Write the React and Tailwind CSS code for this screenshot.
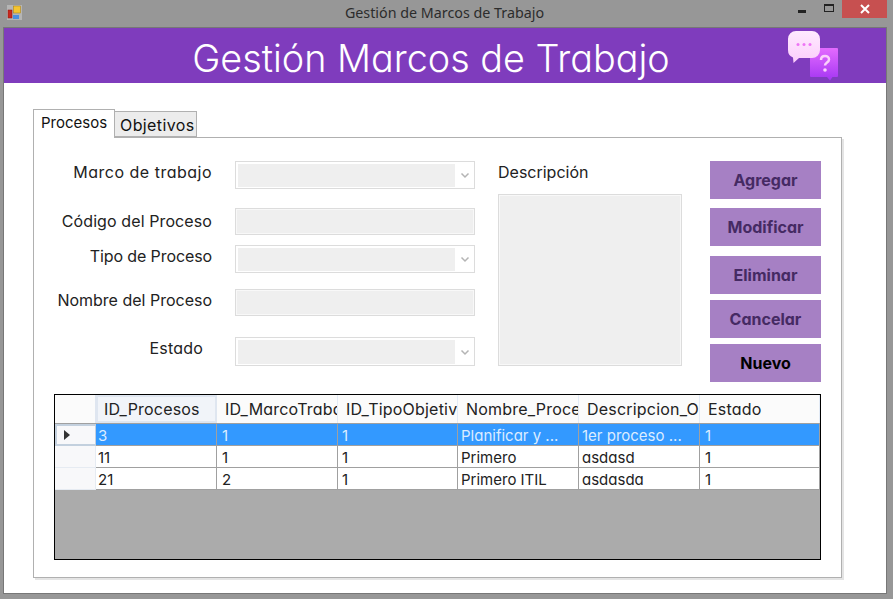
const columns = [
  { name: "ID_Procesos", width: 121, cell: "pl-[2px]" },
  { name: "ID_MarcoTrabajo", width: 121, cell: "pl-[5px]" },
  { name: "ID_TipoObjetivo", width: 120, cell: "pl-[4px]" },
  { name: "Nombre_Proceso", width: 121, cell: "pl-[3px]" },
  { name: "Descripcion_Objetivo", width: 121, cell: "pl-[3px]" },
  { name: "Estado", width: 120, cell: "pl-[5px]" },
];

const rows = [
  ["3", "1", "1", "Planificar y ...", "1er proceso ...", "1"],
  ["11", "1", "1", "Primero", "asdasd", "1"],
  ["21", "2", "1", "Primero ITIL", "asdasda", "1"],
];

const fields = [
  { label: "Marco de trabajo", select: true, className: "mt-0 h-[28px]", labelClass: "pb-[6px] pr-[23px] tracking-[0.5px]" },
  { label: "Código del Proceso", className: "mt-[19px] h-[27px]", labelClass: "pb-[2px] pr-[23px] tracking-[0.1px]" },
  { label: "Tipo de Proceso", select: true, className: "mt-[10px] h-[28px]", labelClass: "pb-[6px] pr-[23px] tracking-[-0.1px]" },
  { label: "Nombre del Proceso", className: "mt-[16px] h-[27px]", labelClass: "pb-[6px] pr-[23px]" },
  { label: "Estado", select: true, className: "mt-[21px] h-[29px]", labelClass: "pb-[8px] pr-[32px] tracking-[0.2px]" },
];

const buttons = [
  { label: "Agregar", className: "mt-0 text-[#452a63]" },
  { label: "Modificar", className: "mt-[9px] text-[#452a63]" },
  { label: "Eliminar", className: "mt-[10px] text-[#452a63]" },
  { label: "Cancelar", className: "mt-[6px] text-[#452a63]" },
  { label: "Nuevo", className: "mt-[6px] text-black" },
];

function Field({ field }) {
  return (
    <div className={`flex items-center ${field.className}`}>
      <div className={`w-[201px] text-right text-[16px] text-[#222] ${field.labelClass}`}>{field.label}</div>
      {field.select ? (
        <div className="flex h-full w-[240px] items-center border border-[#dcdcdc] bg-white pl-[2px]">
          <div className="h-[calc(100%-3px)] w-[217px] bg-[#efefef]" />
          <svg width="18" height="18" viewBox="0 0 18 18" className="ml-[1px]">
            <path d="M5.500 7.500 9 11l3.500-3.500" fill="none" stroke="#b4b4b4" strokeWidth="1.500" />
          </svg>
        </div>
      ) : (
        <div className="h-full w-[240px] border border-[#dcdcdc] bg-[#efefef] shadow-[inset_0_0_0_1px_#f8f8f8]" />
      )}
    </div>
  );
}

function HelpIcon() {
  return (
    <svg width="52" height="52" viewBox="0 0 52 52" className="mt-[2px] shrink-0">
      <defs>
        <linearGradient id="backBubble" x1="0" y1="0" x2="0" y2="1">
          <stop offset="0" stopColor="#e36bff" />
          <stop offset="1" stopColor="#a436f2" />
        </linearGradient>
        <linearGradient id="frontBubble" x1="0" y1="0" x2="0" y2="1">
          <stop offset="0" stopColor="#ffeaff" />
          <stop offset="1" stopColor="#fbcdfb" />
        </linearGradient>
      </defs>
      <path d="M24 18h26a1 1 0 0 1 1 1v27a1 1 0 0 1-1 1h-4.500l-2.500 3.500-3-3.500H24a1 1 0 0 1-1-1V19a1 1 0 0 1 1-1z" fill="url(#backBubble)" />
      <path d="M9 1h16a8 8 0 0 1 8 8v11a8 8 0 0 1-8 8H12l-5.500 5-.5-5.500A8 8 0 0 1 1 20V9a8 8 0 0 1 8-8z" fill="url(#frontBubble)" />
      <circle cx="11" cy="14.500" r="1.500" fill="#ee74f5" />
      <circle cx="17" cy="14.500" r="1.500" fill="#ee74f5" />
      <circle cx="23" cy="14.500" r="1.500" fill="#ee74f5" />
      <path d="M34 30c0-2.500 1.700-4 4-4s4 1.500 4 3.600c0 3-4 3-4 6" fill="none" stroke="#fbd0fb" strokeWidth="2.500" />
      <circle cx="38" cy="40" r="1.800" fill="#fbd0fb" />
    </svg>
  );
}

function DataGrid() {
  return (
    <div className="mt-[11px] ml-[20px] flex h-[166px] w-[767px] flex-col border border-black bg-[#ababab]">
      <div className="flex h-[29px] border-b border-[#a0a0a0] bg-[#fbfbfb] text-[16px] tracking-[0.2px] text-[#222]">
        <div className="w-[41px] border-r border-[#dfe6f0]" />
        {columns.map((col, i) => (
          <div
            key={col.name}
            style={{ width: col.width }}
            className={`overflow-hidden whitespace-nowrap ${
              i === 0
                ? "border-2 border-[#dfe6f0] bg-[#f1f4f9] pl-[6px] leading-[25px]"
                : "border-r border-[#e3ebf6] pl-[8px] leading-[29px]"
            }`}
          >
            {col.name}
          </div>
        ))}
      </div>
      {rows.map((row, r) => (
        <div key={row[0]} className="flex h-[22px] text-[15px] leading-[24px]">
          <div
            className={`flex w-[41px] items-center border-r border-[#a0a0a0] bg-[#f8f8fa] pl-[6px] ${
              r === 0 ? "border-2 border-[#c3d0de]" : "border-b border-[#e6ebf2]"
            }`}
          >
            {r === 0 && (
              <svg width="8" height="12" viewBox="0 0 8 12">
                <path d="M1 1l6 5-6 5z" fill="#333" />
              </svg>
            )}
          </div>
          {row.map((cell, c) => (
            <div
              key={c}
              style={{ width: columns[c].width }}
              className={`overflow-hidden whitespace-nowrap border-r border-b border-[#a0a0a0] ${columns[c].cell} ${
                r === 0 ? "bg-[#3399ff] text-[#dcecff]" : "bg-white text-[#222]"
              }`}
            >
              {cell}
            </div>
          ))}
        </div>
      ))}
    </div>
  );
}

export default function App() {
  return (
    <div className="flex h-[599px] w-[893px] flex-col overflow-hidden bg-[#979797] font-['Inter','Liberation_Sans',sans-serif] [font-feature-settings:'cv11']">
      {/* Title bar */}
      <div className="relative flex h-[27px] shrink-0 items-start">
        <svg width="15" height="15" viewBox="0 0 15 15" className="mt-[5px] ml-[7px]">
          <rect x="0" y="0" width="15" height="15" fill="#b5b5b5" />
          <rect x="1" y="5" width="4" height="8" fill="#c8281e" stroke="#8a1a12" strokeWidth="0.5" />
          <rect x="6.500" y="1" width="7" height="7" fill="#f4c430" stroke="#a47a10" strokeWidth="0.5" />
          <rect x="6" y="10" width="6" height="4" fill="#4a8fe0" />
        </svg>
        <div className="mt-[4px] w-[860px] pr-[15px] text-center font-['Noto_Sans',sans-serif] text-[14.3px] leading-[18px] text-[#2c2c2c]">
          Gestión de Marcos de Trabajo
        </div>
        <div className="absolute top-[10px] left-[798px] h-[3px] w-[8px] bg-[#222]" />
        <div className="absolute top-[4px] left-[824px] h-[8px] w-[10px] border border-t-2 border-[#222]" />
        <div className="absolute top-0 left-[842px] flex h-[18px] w-[45px] items-center justify-center bg-[#c75050]">
          <svg width="10" height="10" viewBox="0 0 10 10">
            <path d="M1 1l8 8M9 1l-8 8" stroke="#fff" strokeWidth="2" />
          </svg>
        </div>
      </div>

      {/* Window body */}
      <div className="ml-[3px] h-[567px] w-[884px] border border-[#777] bg-white">
        <div className="flex h-[55px] items-start bg-[#7f3cbd]">
          <div className="w-[783px] pl-[71px] text-center text-[37.75px] leading-[60px] font-light text-white">
            Gestión Marcos de Trabajo
          </div>
          <HelpIcon />
        </div>

        <div className="ml-[29px] mt-[26px] w-[810px]">
          {/* Tabs */}
          <div className="flex h-[28px] items-end">
            <div className="relative z-10 -mb-[1px] h-[29px] w-[82px] border border-b-0 border-[#b0b0b0] bg-white pl-[7px] text-[15px] leading-[26px] text-[#111]">
              Procesos
            </div>
            <div className="h-[26px] w-[82px] border border-l-0 border-[#b0b0b0] bg-[#ececec] pl-[5px] text-[16px] leading-[26px] tracking-[0.4px] text-[#111]">
              Objetivos
            </div>
          </div>

          {/* Tab page */}
          <div className="h-[441px] w-[809px] border border-[#b0b0b0] pt-[23px] shadow-[2px_2px_0_#e4e4e4]">
            <div className="flex h-[222px]">
              <div className="w-[441px]">
                {fields.map((field) => (
                  <Field key={field.label} field={field} />
                ))}
              </div>
              <div className="ml-[23px] w-[184px]">
                <div className="mt-[1px] text-[16px] leading-[20px] text-[#222]">Descripción</div>
                <div className="mt-[12px] h-[172px] w-[184px] border border-[#dcdcdc] bg-[#efefef] shadow-[inset_0_0_0_1px_#f8f8f8]" />
              </div>
              <div className="ml-[28px] w-[111px]">
                {buttons.map((button) => (
                  <div
                    key={button.label}
                    className={`flex h-[38px] items-center justify-center bg-[#a680c4] text-[16px] font-bold ${button.className}`}
                  >
                    {button.label}
                  </div>
                ))}
              </div>
            </div>
            <DataGrid />
          </div>
        </div>
      </div>
    </div>
  );
}
